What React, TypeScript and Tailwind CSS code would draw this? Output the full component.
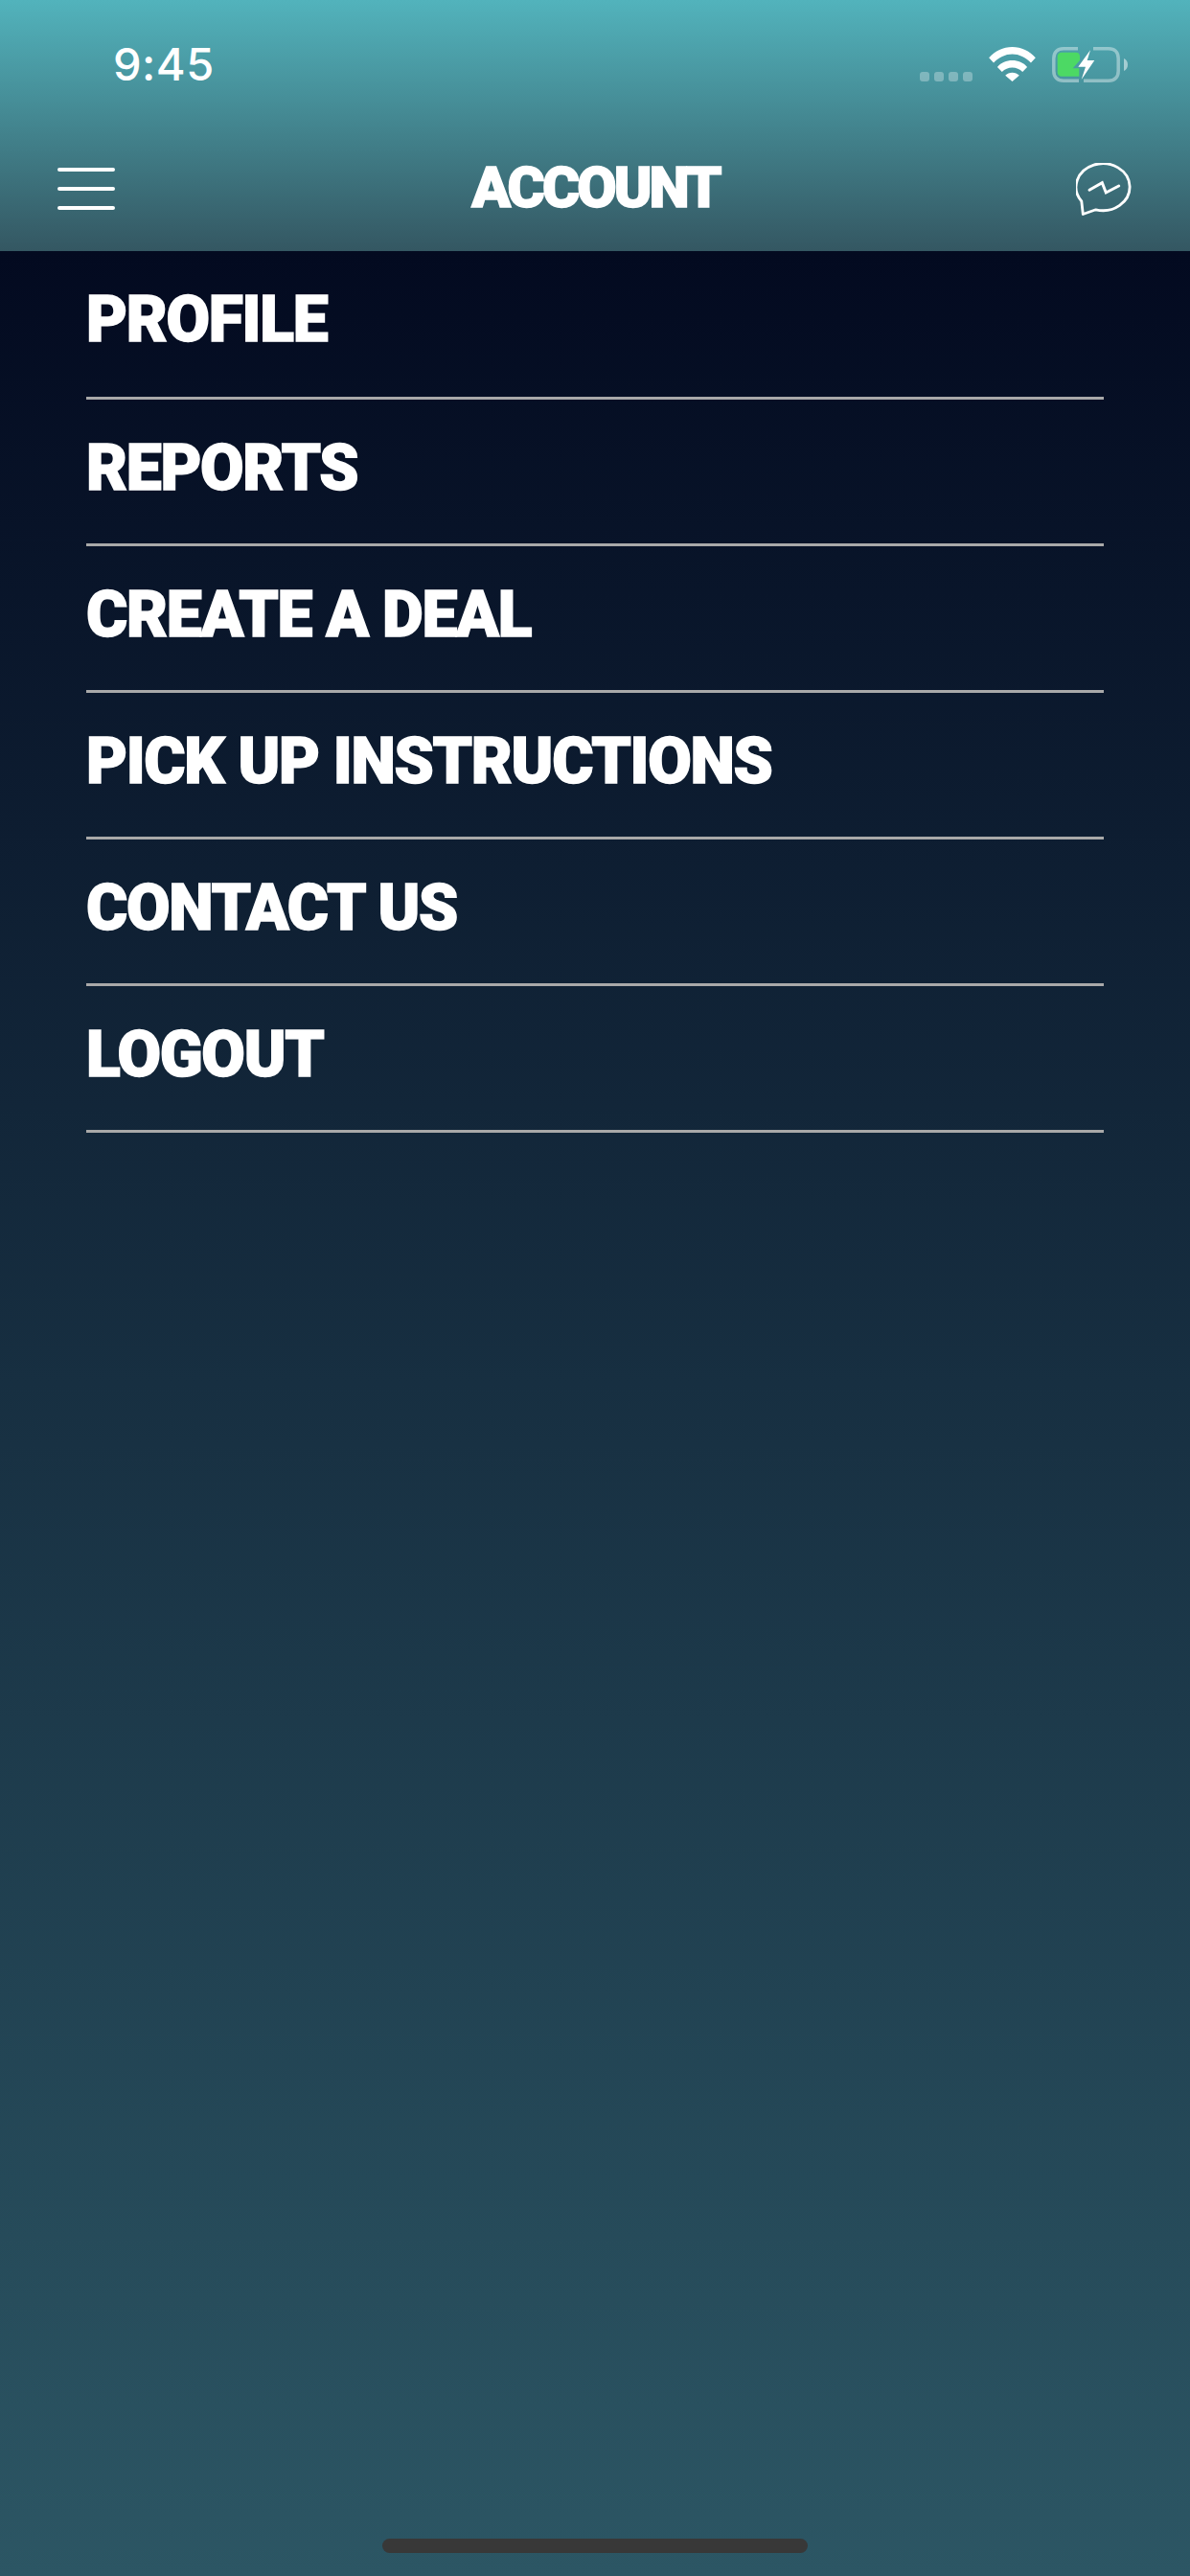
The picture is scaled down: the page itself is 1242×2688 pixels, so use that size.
import React from "react";

const MENU_ITEMS = [
  "PROFILE",
  "REPORTS",
  "CREATE A DEAL",
  "PICK UP INSTRUCTIONS",
  "CONTACT US",
  "LOGOUT"
];

const WifiIcon = () => (
  <svg width="49" height="36" viewBox="0 0 50 37" fill="#fff">
    <path d="M0 11.500C6.500 4.200 15.300 0 25 0s18.500 4.200 25 11.500l-5 5.500C39.500 11.200 32.600 7.700 25 7.700S10.500 11.200 5 17z" />
    <path d="M9 21.500C13.100 16.900 18.800 14.500 25 14.500s11.900 2.400 16 7l-5 5.300C33 23.800 29.200 22.200 25 22.200s-8 1.600-11 4.600z" />
    <path d="M17.500 30.500c2-2 4.700-3.100 7.500-3.100s5.500 1.100 7.500 3.100L25 37z" />
  </svg>
);

const BatteryIcon = () => (
  <svg width="79" height="37" viewBox="0 0 79 37">
    <path
      d="M27 1.800H12C5.500 1.800 1.800 5.500 1.800 12v13c0 6.500 3.700 10.200 10.200 10.200h16M33 35.200h26c6.500 0 10.200-3.700 10.200-10.200V12c0-6.500-3.700-10.200-10.200-10.200H43"
      fill="none"
      stroke="#fff"
      strokeOpacity="0.4"
      strokeWidth="3.500"
    />
    <path d="M75 12c2.500 1 4 3.500 4 6.500s-1.500 5.500-4 6.500z" fill="#fff" fillOpacity="0.5" />
    <path
      d="M10 5.700h15c2.500 0 4 1.500 4 4V14l-7.300 8.300h6.600v8.400H10c-2.500 0-4.300-1.800-4.300-4.300V10c0-2.500 1.800-4.300 4.300-4.300z"
      fill="#4cd964"
    />
    <path d="M40 3.300L27.300 20.700H35L30.700 34 44.300 14h-7.600z" fill="#fff" />
  </svg>
);

const MessengerIcon = () => (
  <svg width="58" height="56" viewBox="0 0 58 56" fill="none" stroke="#fff">
    <path
      d="M7.300 53.500L5.800 40A28 24.500 0 1 1 20.700 48.800z"
      strokeWidth="2.800"
      strokeLinejoin="round"
    />
    <path
      d="M14 28.300L27.300 20.700 31.300 31 44.700 24"
      strokeWidth="3"
      strokeLinecap="round"
      strokeLinejoin="miter"
    />
  </svg>
);

const Header = () => (
  <header className="h-[262px] flex flex-col bg-linear-to-b/srgb from-[#52b3bc] to-[#345762]">
    <div className="h-[134px] pl-[118px] pr-[65px] pt-[38px] flex items-start justify-between">
      <span className="font-['Inter',sans-serif] text-[47px] leading-[58px] font-medium tracking-[0.5px] text-white">
        9:45
      </span>
      <div className="flex items-start pt-[11px]">
        <div className="flex gap-[5px] mt-[26px] mr-[17px]">
          <span className="w-[10px] h-[10px] rounded-[3px] bg-white/30"></span>
          <span className="w-[10px] h-[10px] rounded-[3px] bg-white/30"></span>
          <span className="w-[10px] h-[10px] rounded-[3px] bg-white/30"></span>
          <span className="w-[10px] h-[10px] rounded-[3px] bg-white/30"></span>
        </div>
        <WifiIcon />
        <div className="ml-[17px]">
          <BatteryIcon />
        </div>
      </div>
    </div>
    <div className="flex-1 pl-[60px] pr-[61px] flex items-start justify-between">
      <div className="w-[60px] mt-[41px] flex flex-col gap-[16px]">
        <span className="block h-[4px] rounded-full bg-white"></span>
        <span className="block h-[4px] rounded-full bg-white"></span>
        <span className="block h-[4px] rounded-full bg-white"></span>
      </div>
      <h1 className="mt-[25px] font-['Roboto',sans-serif] font-black text-[60px] leading-[74px] tracking-[-3px] text-white [-webkit-text-stroke:1.5px_#fff]">
        ACCOUNT
      </h1>
      <div className="mt-[36px]">
        <MessengerIcon />
      </div>
    </div>
  </header>
);

export default function App() {
  return (
    <div className="w-[1242px] h-[2688px] flex flex-col overflow-hidden font-['Roboto',sans-serif]">
      <Header />
      <main className="flex-1 flex flex-col justify-between bg-linear-to-b/srgb from-[#030a20] to-[#2c5664]">
        <ul className="px-[90px]">
          {MENU_ITEMS.map(item => (
            <li
              key={item}
              className="h-[153px] first:h-[155px] flex items-start border-b-[3px] border-[#a9a9a9]"
            >
              <span className="mt-[32px] font-black text-[66px] leading-[80px] tracking-[-1.3px] text-white [-webkit-text-stroke:1.5px_#fff]">
                {item}
              </span>
            </li>
          ))}
        </ul>
        <div className="flex justify-center pb-[24px]">
          <div className="w-[444px] h-[15px] rounded-full bg-[#383838]"></div>
        </div>
      </main>
    </div>
  );
}
